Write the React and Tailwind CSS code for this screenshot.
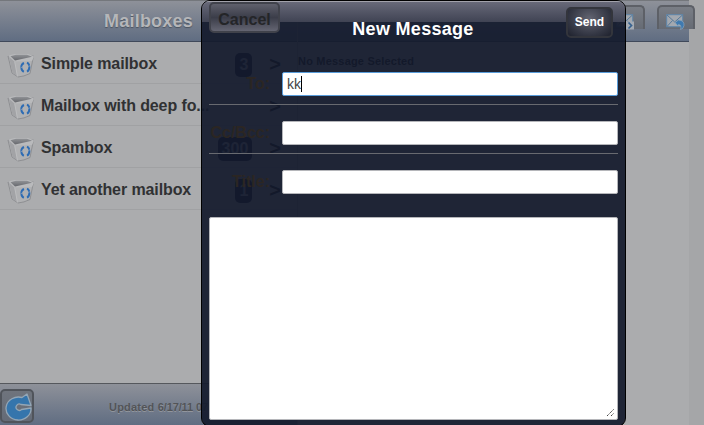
const font = { fontFamily: '"Liberation Sans", Arial, sans-serif' };

const mailboxes = [
  { name: "Simple mailbox", count: "3" },
  { name: "Mailbox with deep fo...", count: "" },
  { name: "Spambox", count: "300" },
  { name: "Yet another mailbox", count: "1" },
];

function BinIcon() {
  return (
    <svg width="28" height="25" viewBox="0 0 28 25" className="shrink-0">
      <defs>
        <linearGradient id="bin" x1="0" x2="0" y1="0" y2="1">
          <stop offset="0" stopColor="#909296" />
          <stop offset="1" stopColor="#66686d" />
        </linearGradient>
      </defs>
      <path d="M1 3 L26.500 3 L23 20.500 Q17 23.500 11 24 L5 20 Z" fill="#b0b1b3" stroke="#8a8b8e" strokeWidth=".9" />
      <path d="M2 4 L7.500 8.500 L10 23 L5.500 19.500 Z" fill="#a2a3a6" />
      <path d="M1 2.500 L8 1 L21 1 L27 3.500 L25 8 L7.500 8.500 Z" fill="#b9babc" />
      <path d="M3.500 3.200 L9 1.800 L20 1.800 L25 3.700 L8 7.500 Z" fill="url(#bin)" />
      <path d="M7.700 8.500 L10.500 23.500" stroke="#bcbdbf" strokeWidth="1" />
      <path d="M17 10 C13.300 11.500 13.500 17 16.800 18.800 M20 9.700 C23.300 11.200 23 17 20 18.600" fill="none" stroke="#2d6cb4" strokeWidth="1.900" />
      <path d="M13.500 15 L16 13.500 M20.500 13.500 L24 12.500" stroke="#b0b1b3" strokeWidth=".6" />
    </svg>
  );
}

function MailIcon({ reply }) {
  return (
    <svg width="20" height="17" viewBox="0 0 20 17">
      <rect x=".7" y=".7" width="16" height="12" fill="#a3a8af" stroke="#5f87ab" />
      <path d="M1 1 L8.700 8 L16.500 1 M1 12.500 L6.500 6.500 M16.500 12.500 L11 6.500" fill="none" stroke="#55799a" />
      {reply ? (
        <path d="M9 8.500 L12.500 6 Q18.500 6.500 18 11.500 Q17.500 15 14.500 15.500 Q16 11 12.500 10.500 L12 12 Z" fill="#3f7ab0" stroke="#8ca5b9" strokeWidth=".7" />
      ) : (
        <g>
          <rect x="10" y="7.500" width="8" height="8" fill="#a3aab3" />
          <path d="M12.500 8.500 L15.500 11.500 L12.500 14.500" fill="none" stroke="#35618f" strokeWidth="1.700" />
        </g>
      )}
    </svg>
  );
}

function ToolButton({ reply }) {
  return (
    <div className="flex h-6 w-[38px] shrink-0 items-start justify-center rounded-t-[5px] border-2 border-b-0 border-[#5d6067] bg-linear-to-b from-[#7a7e86] to-[#666b74] pt-[7px]">
      <MailIcon reply={reply} />
    </div>
  );
}

function Sidebar() {
  return (
    <div className="flex h-full w-[298px] shrink-0 flex-col border-r border-[#8b8c8f] bg-[#abacae]">
      <div className="flex h-[42px] shrink-0 items-center justify-center border-t border-b border-t-[#74777c] border-b-[#40495a] bg-linear-to-b from-[#8e9199] to-[#606d82]">
        <span className="text-[18px] font-bold tracking-[0.2px] text-[#b5b6b9] [text-shadow:0_1px_1px_#4c5460]">Mailboxes</span>
      </div>
      <div className="flex-1">
        {mailboxes.map((m) => (
          <div key={m.name} className="flex h-[42px] items-center border-b border-[#a0a1a3] pr-4 pl-[7px]">
            <div className="pt-[6px]">
              <BinIcon />
            </div>
            <span className="ml-[6px] flex-1 pt-[2px] text-[16px] font-bold tracking-[-0.1px] whitespace-nowrap text-[#303133]">{m.name}</span>
            {m.count && (
              <span className="mt-1 flex h-6 items-center rounded-[5px] bg-[#000a28] px-[4px] text-[16px] font-bold text-[#9a9da6]">{m.count}</span>
            )}
            <span className="ml-[17px] pt-[2px] text-[20px] leading-5 font-bold text-black">&gt;</span>
          </div>
        ))}
      </div>
      <div className="flex h-[42px] shrink-0 items-center border-t border-[#55585d] bg-linear-to-b from-[#8e9199] to-[#606d82]">
        <div className="mt-[3px] flex h-[34px] w-[34px] shrink-0 items-center justify-center rounded-[5px] border-2 border-[#50545b] bg-linear-to-b from-[#6f747d] to-[#646b77]">
          <svg width="30" height="30" viewBox="0 0 30 30" className="shrink-0">
            <path d="M20 6.500 L25 3 L29 14.500 L19 13.500 A3.200 3.200 0 1 0 19.500 18.500 L29 17 A12.500 11.500 0 1 1 20 6.500 Z" fill="#3575ac" stroke="#93a6b6" strokeWidth="1.300" strokeLinejoin="round" />
          </svg>
        </div>
        <span className="ml-[75px] pt-[5px] text-[11px] font-bold whitespace-nowrap text-[#525458] [text-shadow:0_1px_0_#92969d]">
          <span className="tracking-[0.2px]">Updated </span>
          <span className="tracking-[-0.1px]">6/17/11 07:24</span>
        </span>
      </div>
    </div>
  );
}

function Field({ label, value, focused, last }) {
  return (
    <div className={last ? "flex h-[49px]" : "flex h-[49px] border-b border-[#686a70]"}>
      <span className="w-[61px] pt-[16px] text-right text-[16px] font-bold whitespace-nowrap text-[#2b2623]">{label}</span>
      <div className={focused
        ? "mt-[16px] ml-auto flex h-[24px] w-[336px] items-center rounded-[2px] border border-[#5a9dda] bg-white px-1"
        : "mt-[16px] ml-auto flex h-[24px] w-[336px] items-center rounded-[2px] border border-[#b5b6ba] bg-white px-1"}>
        {value && <span className="border-r border-black text-[14px] leading-4 text-[#444]">{value}</span>}
      </div>
    </div>
  );
}

function Composer() {
  return (
    <div className="absolute top-0 left-[201px] h-[427px] w-[425px] overflow-hidden rounded-[9px] border border-black bg-[#141b2d]/93 px-[7px] shadow-[inset_0_1px_0_#9899a3]">
      <div className="-mx-[7px] flex h-[21px] items-start justify-between bg-linear-to-b from-[#727382]/90 to-[#444757]/90 px-[7px] shadow-[inset_0_1px_0_#a1a1aa]">
        <button className="mt-[1px] h-[31px] w-[71px] shrink-0 rounded-[5px] border-2 border-[#40424b] bg-linear-to-b from-[#5f606c] via-[#3b3d49] to-[#646572] pt-[5px] text-[16px] leading-5 font-bold text-[#242528]">Cancel</button>
        <h1 className="mt-[17px] text-[18px] leading-[22px] font-bold tracking-[0.3px] whitespace-nowrap text-white">New Message</h1>
        <button className="mt-[6px] mr-[5px] ml-5 h-[31px] w-[47px] shrink-0 rounded-[5px] border-2 border-[#33353c] bg-[radial-gradient(ellipse_at_50%_35%,#626471,#343744_65%,#1e212d)] text-[12px] leading-4 font-bold text-white">
          <span className="relative -top-px">Send</span>
        </button>
      </div>
      <div className="pt-[34px]">
        <Field label="To:" value="kk" focused />
        <Field label="Cc/Bcc:" />
        <Field label="Title:" last />
      </div>
      <div className="mt-[14px] flex h-[203px] items-end justify-end rounded-[2px] border border-[#b5b6ba] bg-white">
        <svg width="10" height="10" viewBox="0 0 10 10" className="mr-px mb-px">
          <path d="M1 8 L8 1 M5 8 L8 5" stroke="#444" strokeWidth="1" strokeDasharray="1.400 .6" />
        </svg>
      </div>
    </div>
  );
}

export default function App() {
  return (
    <div className="relative flex h-[425px] w-[704px] overflow-hidden bg-[#a5a6a8]" style={font}>
      <Sidebar />
      <div className="flex w-[391px] shrink-0 flex-col bg-[#abacae]">
        <div className="flex h-[42px] justify-end gap-3 border-t border-b border-t-[#74777c] border-b-[#40495a] bg-linear-to-b from-[#8e9199] to-[#606d82] pt-1">
          <ToolButton />
          <div className="-mr-[6px]">
            <ToolButton reply />
          </div>
        </div>
        <p className="pt-[13px] text-[11px] leading-[13px] font-bold tracking-[0.2px] text-black">No Message Selected</p>
      </div>
      <Composer />
    </div>
  );
}
